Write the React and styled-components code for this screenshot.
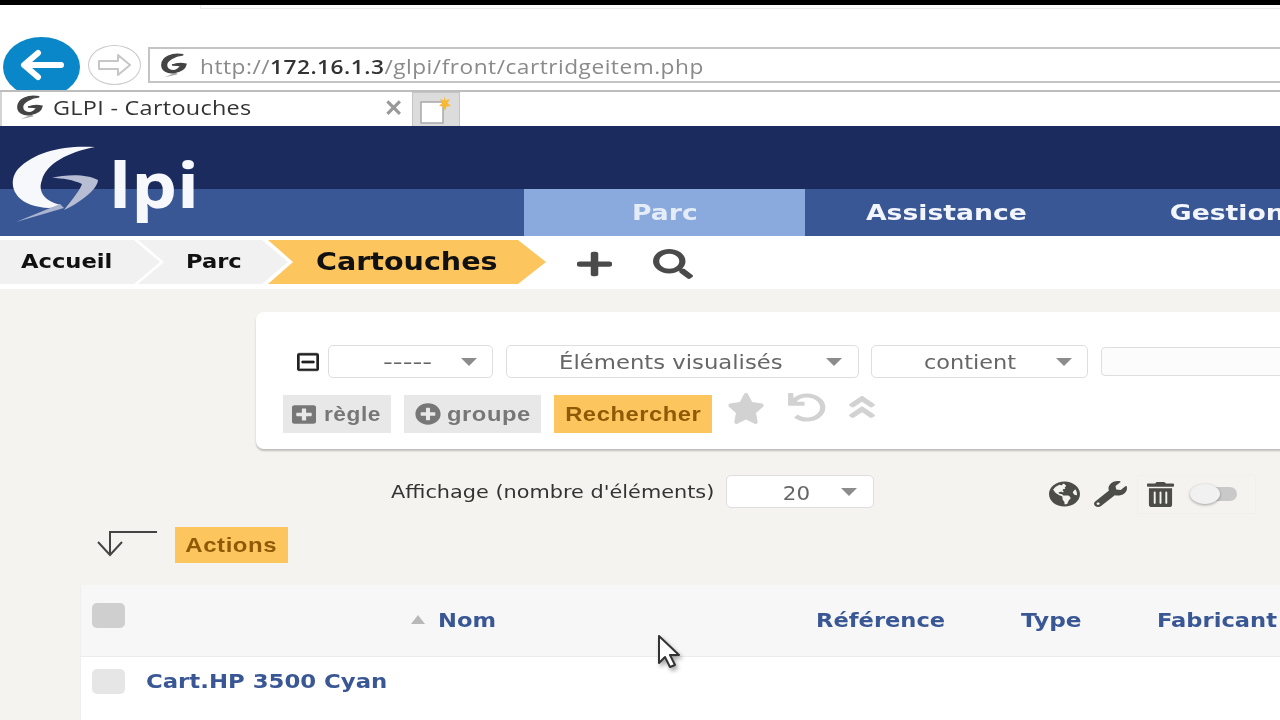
import React from 'react';
import styled, { createGlobalStyle } from 'styled-components';
import { FaGlobeAmericas, FaWrench, FaTrashAlt, FaStar, FaPlusSquare, FaPlusCircle, FaAngleDoubleUp, FaUndo, FaRegMinusSquare, FaPlus, FaSearch } from 'react-icons/fa';

const Global = createGlobalStyle`
  html, body { margin: 0; padding: 0; width: 1280px; height: 720px; overflow: hidden; background: #fff; }
  * { box-sizing: border-box; }
`;

const Page = styled.div`
  width: 1280px; height: 720px; overflow: hidden; position: relative;
  display: flex; flex-direction: column;
  font-family: "DejaVu Sans", sans-serif; background: #f4f3f0;
  filter: blur(0.45px);
`;

const Wide = styled.span`
  display: inline-block; white-space: nowrap; flex: none;
  transform: scaleX(${p => p.$x});
  transform-origin: ${p => p.$o || 'left'} center;
`;

const TopStrip = styled.div`
  height: 5px; flex: none; background: #000;
`;

const Chrome = styled.div`
  height: 121px; flex: none; background: #fff; position: relative;
  display: flex; flex-direction: column; justify-content: flex-end;
`;

const ChromeSliver = styled.div`
  position: absolute; left: 200px; top: 0; right: 0; height: 4px;
  border-left: 1px solid #eee; border-bottom: 1px solid #eee;
`;

const NavRow = styled.div`
  height: 53px; flex: none; display: flex; align-items: flex-start; padding: 0 0 0 3px; overflow: hidden;
`;

const BackButton = styled.div`
  width: 77px; height: 60px; border-radius: 50%; background: #0a87c9;
  display: flex; align-items: center; justify-content: center; flex: none; padding-bottom: 4px;
`;

const ForwardButton = styled.div`
  width: 53px; height: 40px; margin: 8px 0 0 8px; border-radius: 50%; border: 1.5px solid #c9c9c9;
  display: flex; align-items: center; justify-content: center; flex: none;
`;

const AddressBar = styled.div`
  flex: 1; height: 36px; margin: 10px 0 0 7px; border: 2px solid #c4c4c4; border-right: none;
  display: flex; align-items: center; padding: 1px 0 0 9px; gap: 11px;
  font-family: "Open Sans", sans-serif; font-size: 20.5px; color: #8a8a8a; letter-spacing: 0.45px;
`;

const Host = styled.span`
  color: #333; font-weight: 600;
`;

const TabRow = styled.div`
  height: 36px; flex: none; display: flex; align-items: stretch; background: #fff; border-top: 2px solid #bdbdbd;
`;

const Tab = styled.div`
  width: 412px; display: flex; align-items: center; padding: 0 9px 3px 13px; gap: 8px;
  font-family: "Open Sans", sans-serif; font-size: 20px; color: #333; background: #fff;
  border-left: 2px solid #d4d4d4;
`;

const TabTitle = styled.span`
  flex: 1; letter-spacing: 0.25px;
`;

const TabClose = styled.span`
  color: #999; font-size: 23px; font-weight: 700; line-height: 1;
`;

const NewTab = styled.div`
  width: 48px; background: #dcdcdc; border: 1px solid #c4c4c4; border-bottom: none;
  display: flex; align-items: center; justify-content: center;
`;

const Header = styled.header`
  height: 110px; flex: none; position: relative; display: flex; flex-direction: column;
`;

const HeaderTop = styled.div`
  height: 63px; background: #1b2b5e;
`;

const Menu = styled.nav`
  height: 47px; background: #3a5795; display: flex; padding-left: 524px;
`;

const MenuItem = styled.div`
  width: ${p => p.$w}px; flex: none; display: flex; align-items: center; justify-content: center;
  background: ${p => (p.$active ? '#8aa9dc' : 'transparent')};
  color: ${p => (p.$active ? '#e4ecf8' : '#f2f5fb')};
  font-weight: 700; font-size: 21px;
`;

const Logo = styled.div`
  position: absolute; left: 10px; top: 18px; width: 190px; height: 100px;
`;

const LogoText = styled.span`
  position: absolute; left: 99px; top: -10px;
  font-family: "Open Sans", sans-serif; font-weight: 700; font-size: 62px; line-height: 100px; color: #f6f8fc;
  transform: scaleX(1.17); transform-origin: left;
`;

const CrumbBar = styled.div`
  height: 53px; flex: none; background: #fff; padding-top: 4px; display: flex; align-items: flex-start;
`;

const Crumb = styled.div`
  height: 44px; flex: none; width: ${p => p.$w}px; margin-left: ${p => p.$ml || 0}px;
  padding-left: ${p => p.$pl}px; display: flex; align-items: center;
  background: ${p => (p.$current ? '#fdc55e' : '#f1f1f1')};
  clip-path: ${p => p.$clip};
  color: #111; font-weight: 700; font-size: ${p => (p.$current ? 24 : 19)}px;
  padding-bottom: ${p => (p.$current ? 0 : 3)}px;
`;

const CrumbIcons = styled.div`
  display: flex; align-items: center; height: 44px; gap: 41px; margin-left: 31px; color: #4a4a4a; padding-top: 3px;
`;

const Content = styled.main`
  flex: 1; display: flex; flex-direction: column; min-height: 0;
`;

const SearchCard = styled.section`
  flex: none; width: 1100px; height: 137px; margin: 23px 0 0 256px; padding: 33px 0 0 27px;
  background: #fff; border-radius: 8px; box-shadow: 0 2px 2px rgba(0,0,0,.22);
  display: flex; flex-direction: column; gap: 17px;
`;

const CriteriaRow = styled.div`
  display: flex; align-items: center; height: 33px;
`;

const MinusIcon = styled(FaRegMinusSquare).attrs({ preserveAspectRatio: 'none' })`
  color: #222; width: 22px; height: 20px; margin: 0 9px 0 14px; flex: none;
  stroke: #222; stroke-width: 14;
`;

const Select = styled.div`
  width: ${p => p.$w}px; height: 33px; flex: none; margin-right: ${p => p.$mr || 0}px;
  background: #fff; border: 1.5px solid #dedede; border-radius: 5px;
  display: flex; align-items: center; justify-content: center; position: relative;
  padding-right: ${p => p.$pr || 30}px; padding-top: ${p => p.$pt || 1}px;
  font-size: 19.5px; color: #666;
  &::after {
    content: ''; position: absolute; right: ${p => p.$ar || 16}px; top: 12px;
    border-left: 8px solid transparent; border-right: 8px solid transparent; border-top: 8px solid #8c8c8c;
  }
`;

const TextField = styled.div`
  width: 300px; height: 29px; flex: none; background: #fcfcfc; border: 1.5px solid #dedede; border-radius: 4px;
`;

const ActionsRow = styled.div`
  display: flex; align-items: flex-start; height: 38px;
`;

const GreyButton = styled.div`
  width: ${p => p.$w}px; height: 38px; flex: none; margin-right: 13px; background: #e8e8e8;
  display: flex; align-items: center; padding-left: ${p => p.$pl}px; gap: ${p => p.$gap}px;
  color: #777; font-weight: 700; font-size: 21px;
  font-family: "Liberation Sans", sans-serif; letter-spacing: 0.5px;
`;

const PrimaryButton = styled.div`
  width: ${p => p.$w}px; height: ${p => p.$h}px; flex: none; background: #fdc55e;
  display: flex; align-items: center; justify-content: center;
  color: #8f5a06; font-weight: 700; font-size: 21px;
  font-family: "Liberation Sans", sans-serif; letter-spacing: 0.5px;
`;

const FadedIcons = styled.div`
  display: flex; align-items: flex-start; margin: -2px 0 0 15px; color: #d2d2d2; gap: 23px;
`;

const PagerRow = styled.div`
  flex: none; height: 33px; margin: 26px 0 0 391px; display: flex; align-items: center;
`;

const PagerLabel = styled.span`
  width: 335px; flex: none; font-size: 17px; color: #333;
`;

const ToolIcons = styled.div`
  display: flex; align-items: center; margin-left: 175px; color: #4c4c48; gap: 14px; padding-top: 5px;
`;

const TrashBox = styled.div`
  display: flex; align-items: center; gap: 16px; margin-left: -4px; padding: 6px 18px 6px 9px;
  border: 1px solid #f1f0ed; flex: none;
`;

const Toggle = styled.div`
  width: 47px; height: 20px; flex: none; position: relative;
  &::before { content: ''; position: absolute; left: 16px; right: 0; top: 3px; bottom: 3px; border-radius: 8px; background: #c9c9c9; }
  &::after { content: ''; position: absolute; left: 0; top: 0; width: 30px; height: 20px; border-radius: 50%; background: #f1f1f1; box-shadow: 0 1px 3px rgba(0,0,0,.35); }
`;

const MassRow = styled.div`
  flex: none; height: 36px; margin: 19px 0 0 97px; display: flex; align-items: center; gap: 18px;
`;

const Table = styled.section`
  flex: 1; margin: 22px 0 0 80px; background: #fff; border-left: 1px solid #eeeeec; display: flex; flex-direction: column;
`;

const HeadRow = styled.div`
  height: 72px; flex: none; display: grid; grid-template-columns: 330px 405px 205px 136px 300px;
  align-items: center; background: #f7f7f7; border-bottom: 1px solid #ececec;
`;

const HeadCell = styled.div`
  font-weight: 700; font-size: 20px; color: #3a5795; padding-bottom: 2px;
  display: flex; align-items: center; position: relative;
`;

const CheckCell = styled.div`
  padding-left: 11px; margin-top: -11px;
`;

const Check = styled.div`
  width: 33px; height: 25px; border-radius: 5px; background: ${p => p.$bg};
`;

const SortMark = styled.span`
  width: 0; height: 0; margin-right: 13px; border-left: 7px solid transparent; border-right: 7px solid transparent;
  border-bottom: 9px solid #b8b8b8;
`;

const BodyRow = styled.div`
  height: 48px; display: flex; align-items: center; padding: 0 0 0 11px; gap: 21px;
`;

const ItemLink = styled.a`
  font-weight: 700; font-size: 20px; color: #3a5795;
`;

const Pointer = styled.svg`
  position: absolute; left: 655px; top: 634px; filter: drop-shadow(2px 3px 2px rgba(0,0,0,.35));
`;

const GMark = ({ c = '#444', s = 26 }) => (
  <svg width={s * 1.15} height={s} viewBox="0 0 32 28">
    <path d="M26 2C14 0 3 4 3 13c0 6 6 9 13 8 7-1 12-4 13-9-4-1-10-1-15 1 4 0 7 0 9 1-1 3-5 5-8 5-5 0-7-3-7-6 0-5 8-10 18-11z" fill={c} stroke={c} strokeWidth="1.6" />
    <path d="M18 21l-12 5 14-3z" fill={c} opacity=".5" />
  </svg>
);

const Chevrons = {
  a: 'polygon(0 0, 134px 0, 160px 50%, 134px 100%, 0 100%)',
  p: 'polygon(0 0, 124px 0, 150px 50%, 124px 100%, 0 100%, 26px 50%)',
  c: 'polygon(0 0, 250px 0, 278px 50%, 250px 100%, 0 100%, 25px 50%)',
};

const stretched = { preserveAspectRatio: 'none' };

export default function App() {
  return (
    <Page>
      <Global />
      <TopStrip />
      <Chrome>
        <ChromeSliver />
        <NavRow>
          <BackButton>
            <svg width="44" height="32" viewBox="0 0 44 32" fill="none" stroke="#fff" strokeWidth="6" strokeLinecap="round" strokeLinejoin="round">
              <path d="M41 16H5M18 4L4 16l14 12" />
            </svg>
          </BackButton>
          <ForwardButton>
            <svg width="36" height="24" viewBox="0 0 36 24" fill="none" stroke="#c6c6c6" strokeWidth="2">
              <path d="M2 8h19V2l12 10-12 10v-6H2z" strokeLinejoin="round" />
            </svg>
          </ForwardButton>
          <AddressBar>
            <GMark />
            <Wide $x={1.106}>http://<Host>172.16.1.3</Host>/glpi/front/cartridgeitem.php</Wide>
          </AddressBar>
        </NavRow>
        <TabRow>
          <Tab>
            <GMark />
            <TabTitle><Wide $x={1.17}>GLPI - Cartouches</Wide></TabTitle>
            <TabClose>✕</TabClose>
          </Tab>
          <NewTab>
            <svg width="36" height="30" viewBox="0 0 36 30">
              <rect x="3" y="7" width="22" height="21" fill="#fff" stroke="#a8a8a8" strokeWidth="1.5" />
              <path d="M26 1l1.500 4.500L32 4l-2.500 4 3.500 3-4.500 .4L27 16l-1.800-4.400L21 11l3-3-2-4 4 1.500z" fill="#f8b832" />
            </svg>
          </NewTab>
        </TabRow>
      </Chrome>
      <Header>
        <HeaderTop />
        <Menu>
          <MenuItem $w={281} $active><Wide $x={1.27} $o="center">Parc</Wide></MenuItem>
          <MenuItem $w={282}><Wide $x={1.27} $o="center">Assistance</Wide></MenuItem>
          <MenuItem $w={281}><Wide $x={1.27} $o="center">Gestion</Wide></MenuItem>
        </Menu>
        <Logo>
          <svg width="100" height="82" viewBox="0 0 100 82" style={{ overflow: 'visible' }}>
            <path d="M85 3C55 1 25 7 8 25C-3 38 3 59 30 63C38 65 46 64 51 61C36 58 27 48 32 36C36 20 58 8 85 3z" fill="#f7f8fb" />
            <path d="M42 34C56 30 78 30 88 36C88 44 72 58 54 66C62 56 70 46 72 40C64 36 52 34 42 34z" fill="#b7bdd2" />
            <path d="M54 64L6 78L50 60z" fill="#aab4d0" />
          </svg>
          <LogoText>lpi</LogoText>
        </Logo>
      </Header>
      <CrumbBar>
        <Crumb $w={160} $pl={21} $clip={Chevrons.a}><Wide $x={1.19}>Accueil</Wide></Crumb>
        <Crumb $w={150} $ml={-22} $pl={48} $clip={Chevrons.p}><Wide $x={1.19}>Parc</Wide></Crumb>
        <Crumb $w={278} $ml={-20} $pl={48} $current $clip={Chevrons.c}><Wide $x={1.19}>Cartouches</Wide></Crumb>
        <CrumbIcons>
          <FaPlus {...stretched} style={{ width: 35, height: 28 }} />
          <FaSearch {...stretched} style={{ width: 40, height: 30 }} />
        </CrumbIcons>
      </CrumbBar>
      <Content>
        <SearchCard>
          <CriteriaRow>
            <MinusIcon />
            <Select $w={165} $mr={13} $pr={6} $ar={15}><Wide $x={1.4} $o="center">-----</Wide></Select>
            <Select $w={353} $mr={12} $pr={23}><Wide $x={1.166} $o="center">Éléments visualisés</Wide></Select>
            <Select $w={217} $mr={13} $pr={18} $ar={15}><Wide $x={1.15} $o="center">contient</Wide></Select>
            <TextField />
          </CriteriaRow>
          <ActionsRow>
            <GreyButton $w={108} $pl={9} $gap={8}>
              <FaPlusSquare {...stretched} style={{ width: 24, height: 21 }} />
              <Wide $x={1.08}>règle</Wide>
            </GreyButton>
            <GreyButton $w={137} $pl={11} $gap={6}>
              <FaPlusCircle {...stretched} style={{ width: 26, height: 22 }} />
              <Wide $x={1.13}>groupe</Wide>
            </GreyButton>
            <PrimaryButton $w={158} $h={38}><Wide $x={1.13} $o="center">Rechercher</Wide></PrimaryButton>
            <FadedIcons>
              <FaStar {...stretched} style={{ width: 38, height: 31 }} />
              <FaUndo {...stretched} style={{ width: 38, height: 29 }} />
              <FaAngleDoubleUp {...stretched} style={{ width: 26, height: 28 }} />
            </FadedIcons>
          </ActionsRow>
        </SearchCard>
        <PagerRow>
          <PagerLabel><Wide $x={1.225}>Affichage (nombre d'éléments)</Wide></PagerLabel>
          <Select $w={148} $pr={8} $ar={16} $pt={3}><Wide $x={1.1} $o="center">20</Wide></Select>
          <ToolIcons>
            <FaGlobeAmericas {...stretched} style={{ width: 31, height: 26 }} />
            <FaWrench {...stretched} style={{ width: 33, height: 26 }} />
            <TrashBox>
              <FaTrashAlt {...stretched} style={{ width: 27, height: 25 }} />
              <Toggle />
            </TrashBox>
          </ToolIcons>
        </PagerRow>
        <MassRow>
          <svg width="60" height="30" viewBox="0 0 60 30" fill="none" stroke="#444" strokeWidth="2">
            <path d="M60 2H13V25M1 12L13 25L25 12" />
          </svg>
          <PrimaryButton $w={113} $h={36}><Wide $x={1.14} $o="center">Actions</Wide></PrimaryButton>
        </MassRow>
        <Table>
          <HeadRow>
            <CheckCell><Check $bg="#cfcfcf" /></CheckCell>
            <HeadCell><SortMark /><Wide $x={1.13}>Nom</Wide></HeadCell>
            <HeadCell><Wide $x={1.13}>Référence</Wide></HeadCell>
            <HeadCell><Wide $x={1.16}>Type</Wide></HeadCell>
            <HeadCell><Wide $x={1.13}>Fabricant</Wide></HeadCell>
          </HeadRow>
          <BodyRow>
            <Check $bg="#e6e6e6" />
            <ItemLink><Wide $x={1.14}>Cart.HP 3500 Cyan</Wide></ItemLink>
          </BodyRow>
        </Table>
      </Content>
      <Pointer width="30" height="36" viewBox="0 0 30 36">
        <path d="M4 2v27l6-6 5 10 5-2-5-10h9z" fill="#fff" stroke="#333" strokeWidth="2" strokeLinejoin="round" />
      </Pointer>
    </Page>
  );
}
